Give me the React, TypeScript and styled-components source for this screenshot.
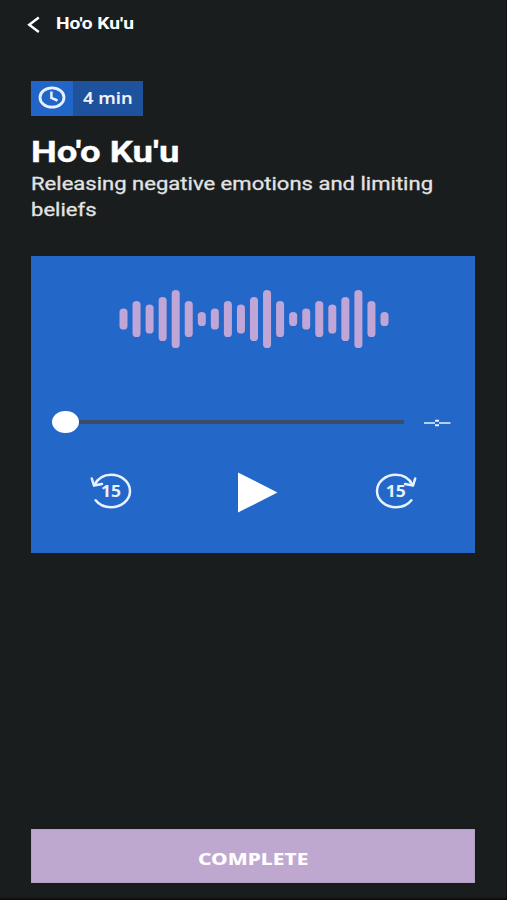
import React from 'react';
import styled, { createGlobalStyle } from 'styled-components';

const GlobalStyle = createGlobalStyle`
  * { box-sizing: border-box; }
  body { margin: 0; background: #191d1d; }
  button { border: 0; padding: 0; background: none; color: inherit; font: inherit; display: block; }
  h1, p { margin: 0; }
  svg { display: block; }
`;

const Screen = styled.main`
  width: 507px;
  height: 900px;
  padding: 0 31px 15px 31px;
  display: flex;
  flex-direction: column;
  background: #191d1d;
  border-bottom: 2px solid #100e12;
  border-right: 1px solid #0f1112;
  color: #fff;
  font-family: Roboto, sans-serif;
  overflow: hidden;
`;

const Wide = styled.span<{ $scale: number; $origin?: string }>`
  display: block;
  width: max-content;
  white-space: nowrap;
  transform: scaleX(${(p) => p.$scale});
  transform-origin: ${(p) => p.$origin ?? 'left'} center;
`;

const Header = styled.header`
  height: 48px;
  margin-left: -5px;
  display: flex;
  align-items: center;
  gap: 15px;
  font-size: 16px;
  line-height: 20px;
  font-weight: 700;
`;

const Badge = styled.div`
  margin-top: 33px;
  width: 112px;
  height: 34.5px;
  display: flex;
  flex: none;
  background: #1f529c;
  font: 600 15.5px/34px 'Noto Sans', sans-serif;
  color: #eef3fb;
`;

const BadgeIcon = styled.div`
  width: 42px;
  margin-right: 10px;
  display: grid;
  place-items: center;
  background: #2265c8;
`;

const Title = styled.h1`
  margin-top: 18.5px;
  font-size: 29px;
  line-height: 36px;
  font-weight: 700;
  -webkit-text-stroke: 0.3px #fff;
`;

const Description = styled.p`
  margin-top: 1px;
  font-size: 18px;
  line-height: 25.5px;
  color: #e2e3e3;
  -webkit-text-stroke: 0.3px #e2e3e3;
`;

const Player = styled.section`
  margin-top: 34px;
  height: 297px;
  flex: none;
  display: flex;
  flex-direction: column;
  align-items: center;
  background: #2367c8;
`;

const Wave = styled.svg`
  margin: 33px 0 0 1px;
`;

const SeekRow = styled.div`
  width: 100%;
  height: 24px;
  margin-top: 60.5px;
  padding: 0 24px 0 21px;
  display: flex;
  align-items: center;
`;

const Thumb = styled.div`
  width: 26.5px;
  height: 22px;
  border-radius: 50%;
  background: #fff;
`;

const Track = styled.div`
  flex: 1;
  height: 3.4px;
  margin-top: 1px;
  background: #3d4b63;
`;

const Remaining = styled.svg`
  margin: 3px 0 0 20px;
`;

const Controls = styled.div`
  width: 100%;
  height: 44px;
  margin-top: 35px;
  padding: 0 57px 0 58px;
  display: flex;
  justify-content: space-between;
  align-items: center;
`;

const PlayButton = styled.button`
  && {
    margin: 4px 0 0 8px;
  }
`;

const CompleteButton = styled.button`
  && {
    margin-top: auto;
    height: 54px;
    display: flex;
    flex: none;
    justify-content: center;
    align-items: center;
    background: #bfa8d0;
    border: 1px solid #b3a0c0;
    color: #fff;
    font: 800 16px/24px 'Noto Sans', sans-serif;
    padding-top: 5px;
  }
`;

const PATTERN = [21, 36, 29, 44, 58, 36, 14];
const BARS = [...PATTERN, ...PATTERN, ...PATTERN];

const SkipIcon = ({ forward = false }: { forward?: boolean }) => (
  <svg width="44" height="40" viewBox="0 0 44 40" fill="none">
    <g
      transform={forward ? 'translate(44 0) scale(-1 1)' : undefined}
      stroke="#e8f1ff"
      strokeWidth="2.5"
      strokeLinecap="round"
      strokeLinejoin="round"
    >
      <path d="M5.4 14C8.6 7.8 14.8 3.8 22 3.8C32.5 3.8 41 11 41 20C41 29 32.5 36.2 22 36.2C15.5 36.2 10 33.6 6.6 29.2" />
      <path d="M2.8 7.5L5 14.6L13 13" />
    </g>
    <text
      x={forward ? 21.8 : 22}
      y="25.7"
      textAnchor="middle"
      textLength="20"
      lengthAdjust="spacingAndGlyphs"
      fill="#e8f1ff"
      fontFamily="Noto Sans, sans-serif"
      fontSize="15.5"
      fontWeight="700"
    >
      15
    </text>
  </svg>
);

export default function App() {
  return (
    <>
      <GlobalStyle />
      <Screen>
        <Header>
          <button aria-label="Back">
            <svg width="15" height="18" viewBox="0 0 15 18" fill="none" stroke="#fff" strokeWidth="2.4">
              <path d="M12.8 2.5L3.2 9.8L12.8 17" />
            </svg>
          </button>
          <Wide $scale={1.2}>Ho'o Ku'u</Wide>
        </Header>

        <Badge>
          <BadgeIcon>
            <svg width="28" height="24" viewBox="0 0 28 24" fill="none" stroke="#e8f1ff" strokeWidth="2.8">
              <ellipse cx="14" cy="11.5" rx="12" ry="9.7" />
              <path d="M13.4 5.5V12L19.5 14.5" strokeWidth="2.5" />
            </svg>
          </BadgeIcon>
          <Wide $scale={1.18}>4 min</Wide>
        </Badge>

        <Title>
          <Wide $scale={1.26}>Ho'o Ku'u</Wide>
        </Title>
        <Description>
          <Wide $scale={1.225}>Releasing negative emotions and limiting</Wide>
          <Wide $scale={1.225}>beliefs</Wide>
        </Description>

        <Player>
          <Wave width="270" height="60" viewBox="0 0 270 60" fill="#bfa6d6">
            {BARS.map((h, i) => (
              <rect key={i} x={0.5 + i * 13.05} y={30 - h / 2} width="8" height={h} rx="4" ry="3.6" />
            ))}
          </Wave>
          <SeekRow>
            <Thumb />
            <Track />
            <Remaining width="27" height="8" viewBox="0 0 27 8" fill="#e8f1ff">
              <path d="M0 3.3H11V4.7H0ZM15 3.3H26.5V4.7H15ZM11 .8H15V2.8H11ZM11 5.2H15V7.2H11Z" />
            </Remaining>
          </SeekRow>
          <Controls>
            <button aria-label="Back 15 seconds">
              <SkipIcon />
            </button>
            <PlayButton aria-label="Play">
              <svg width="40" height="41" viewBox="0 0 40 41" fill="#fff">
                <path d="M0 .5L39.5 20.5L0 40.5Z" />
              </svg>
            </PlayButton>
            <button aria-label="Forward 15 seconds">
              <SkipIcon forward />
            </button>
          </Controls>
        </Player>

        <CompleteButton>
          <Wide $scale={1.31} $origin="center">COMPLETE</Wide>
        </CompleteButton>
      </Screen>
    </>
  );
}
